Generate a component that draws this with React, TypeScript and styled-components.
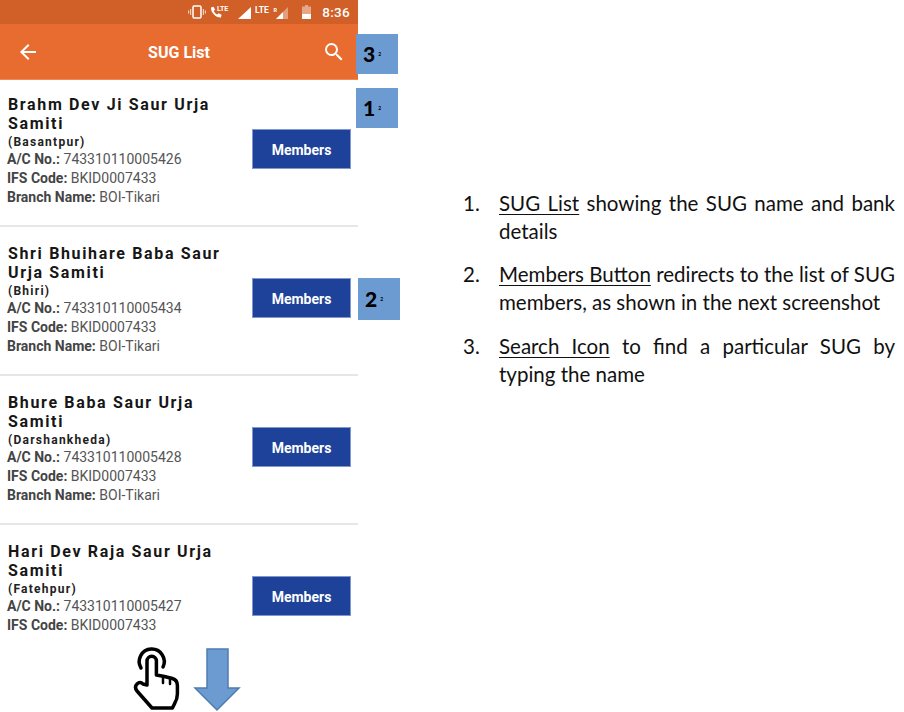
import React from "react";
import styled, { createGlobalStyle } from "styled-components";

const GlobalStyle = createGlobalStyle`
  html, body {
    margin: 0;
    background: #fff;
  }
`;

const Page = styled.div`
  position: relative;
  display: flex;
  width: 904px;
  height: 712px;
  overflow: hidden;
`;

const Phone = styled.div`
  width: 358px;
  flex-shrink: 0;
  font-family: Roboto, sans-serif;
`;

const StatusBar = styled.div`
  height: 24px;
  display: flex;
  align-items: center;
  justify-content: flex-end;
  padding-right: 8px;
  background: #d06027;
  color: #fff;
`;

const StatusIcon = styled.svg<{ $gap?: number }>`
  display: block;
  margin-right: ${p => p.$gap ?? 0}px;
`;

const Clock = styled.span`
  font-size: 13.5px;
  font-weight: 500;
  letter-spacing: 0.3px;
  margin-left: 11px;
`;

const Toolbar = styled.header`
  height: 56px;
  box-sizing: border-box;
  display: flex;
  align-items: center;
  padding: 1px 12px 0 16px;
  background: #e86c2f;
  border-bottom: 1px solid #f08a55;
  color: #fff;
`;

const ToolbarIcon = styled.svg`
  display: block;
  flex-shrink: 0;
  fill: currentColor;
`;

const ToolbarTitle = styled.h1`
  flex: 1;
  margin: 0 4px 0 0;
  text-align: center;
  font-size: 16px;
  font-weight: 700;
`;

const Item = styled.section`
  height: 149px;
  box-sizing: border-box;
  display: flex;
  align-items: flex-start;
  justify-content: space-between;
  padding: 17px 7px 0 7px;
  border-bottom: 2px solid #e6e6e6;

  &:first-of-type {
    height: 147px;
    padding-top: 15px;
  }

  &:last-of-type {
    border-bottom: none;
  }
`;

const Details = styled.div`
  width: 226px;
`;

const Title = styled.div`
  margin-left: 1px;
  font-size: 16px;
  font-weight: 700;
  line-height: 19px;
  letter-spacing: 1.65px;
  color: #161616;
`;

const Place = styled.div`
  margin: 0 0 -1px 1px;
  font-size: 12px;
  font-weight: 700;
  line-height: 18px;
  letter-spacing: 1.25px;
  color: #222;
`;

const Line = styled.div`
  font-size: 14px;
  line-height: 19px;
  color: #555;

  b {
    font-weight: 700;
    color: #444;
  }
`;

const MembersButton = styled.button`
  width: 99px;
  height: 40px;
  margin-top: 34px;
  padding: 1px 0 0;
  border: 1px solid #8098cc;
  background: #1e429a;
  color: #fff;
  font-family: Roboto, sans-serif;
  font-size: 14px;
  font-weight: 700;
`;

const Notes = styled.ol`
  list-style: none;
  margin: 0;
  padding: 189px 0 0 141px;
  width: 396px;
  font-family: Lato, sans-serif;
  font-size: 20.5px;
  line-height: 28px;
  color: #111;
`;

const Note = styled.li`
  position: relative;
  margin-bottom: 15px;
  text-align: justify;

  &:nth-child(2) {
    margin-bottom: 16px;
  }
`;

const NoteNumber = styled.span`
  position: absolute;
  left: -36px;
`;

const NoteLink = styled.span`
  text-decoration: underline;
  text-underline-offset: 3px;
  text-decoration-thickness: 1px;
`;

const Badge = styled.div<{ $x: number; $y: number; $h: number }>`
  position: absolute;
  left: ${p => p.$x}px;
  top: ${p => p.$y}px;
  width: 42px;
  height: ${p => p.$h}px;
  display: flex;
  align-items: center;
  padding: 0 0 1px 7px;
  box-sizing: border-box;
  background: #6c9bd2;
  color: #000;
  font-family: Lato, sans-serif;
  font-size: 21px;
  font-weight: 900;

  small {
    font-size: 5px;
    font-weight: 700;
    margin-left: 3px;
  }
`;

const Overlay = styled.svg<{ $x: number; $y: number }>`
  position: absolute;
  left: ${p => p.$x}px;
  top: ${p => p.$y}px;
`;

const items = [
  { name: "Brahm Dev Ji Saur Urja Samiti", place: "Basantpur", account: "743310110005426", branch: "BOI-Tikari" },
  { name: "Shri Bhuihare Baba Saur Urja Samiti", place: "Bhiri", account: "743310110005434", branch: "BOI-Tikari" },
  { name: "Bhure Baba Saur Urja Samiti", place: "Darshankheda", account: "743310110005428", branch: "BOI-Tikari" },
  // the branch line of this one is below the fold in the screenshot
  { name: "Hari Dev Raja Saur Urja Samiti", place: "Fatehpur", account: "743310110005427" }
];

const StatusIcons = () => (
  <>
    <StatusIcon width="18" height="14" viewBox="0 0 18 14" $gap={4}>
      <rect x="5" y="1" width="8" height="12" rx="1.2" fill="none" stroke="#fff" strokeWidth="1.5" />
      <path d="M2.6 4v6M0.6 5.5v3M15.4 4v6M17.4 5.5v3" stroke="#fff" strokeOpacity="0.7" strokeWidth="1.2" />
    </StatusIcon>
    <StatusIcon width="20" height="14" viewBox="0 0 20 14" $gap={8}>
      <path d="M1 2.5l2.5-.8 1.6 3-1.4 1.4c.7 1.6 1.9 2.8 3.5 3.5l1.4-1.4 3 1.6-.7 2.7C6 12.8.6 7.6 1 2.5z" fill="#fff" />
      <text x="7" y="6" fontFamily="Roboto, sans-serif" fontSize="7" fontWeight="700" fill="#fff">LTE</text>
    </StatusIcon>
    <StatusIcon width="13" height="13" viewBox="0 0 13 13" $gap={4}>
      <path d="M0 13L13 1v12z" fill="#fff" />
    </StatusIcon>
    <StatusIcon width="34" height="14" viewBox="0 0 34 14" $gap={13}>
      <text x="0" y="7.5" fontFamily="Roboto, sans-serif" fontSize="8.5" fontWeight="700" fill="#fff">LTE</text>
      <text x="18.5" y="6.5" fontFamily="Roboto, sans-serif" fontSize="5.5" fontWeight="700" fill="#fff">R</text>
      <path d="M21 14L33 2v12z" fill="#fff" fillOpacity="0.4" />
      <path d="M21 14l7-7v7z" fill="#fff" />
    </StatusIcon>
    <StatusIcon width="9" height="14" viewBox="0 0 9 14">
      <path d="M3 0h3v1.5h3V14H0V1.5h3z" fill="#fff" fillOpacity="0.45" />
      <path d="M0 9h9v5H0z" fill="#fff" />
    </StatusIcon>
  </>
);

const App = () => {
  return (
    <Page>
      <GlobalStyle />
      <Phone>
        <StatusBar>
          <StatusIcons />
          <Clock>8:36</Clock>
        </StatusBar>
        <Toolbar>
          <ToolbarIcon width="24" height="24" viewBox="0 0 24 24">
            <path d="M20 11H7.83l5.59-5.59L12 4l-8 8 8 8 1.41-1.41L7.83 13H20v-2z" />
          </ToolbarIcon>
          <ToolbarTitle>SUG List</ToolbarTitle>
          <ToolbarIcon width="24" height="24" viewBox="0 0 24 24">
            <path d="M15.5 14h-.79l-.28-.27A6.471 6.471 0 0 0 16 9.5 6.5 6.5 0 1 0 9.5 16c1.61 0 3.09-.59 4.23-1.57l.27.28v.79l5 4.99L20.49 19l-4.99-5zm-6 0C7.01 14 5 11.99 5 9.5S7.01 5 9.5 5 14 7.01 14 9.5 11.99 14 9.5 14z" />
          </ToolbarIcon>
        </Toolbar>
        {items.map(item => (
          <Item key={item.account}>
            <Details>
              <Title>{item.name}</Title>
              <Place>({item.place})</Place>
              <Line>
                <b>A/C No.:</b> {item.account}
              </Line>
              <Line>
                <b>IFS Code:</b> BKID0007433
              </Line>
              {item.branch && (
                <Line>
                  <b>Branch Name:</b> {item.branch}
                </Line>
              )}
            </Details>
            <MembersButton>Members</MembersButton>
          </Item>
        ))}
      </Phone>

      <Notes>
        <Note>
          <NoteNumber>1.</NoteNumber>
          <NoteLink>SUG List</NoteLink> showing the SUG name and bank details
        </Note>
        <Note>
          <NoteNumber>2.</NoteNumber>
          <NoteLink>Members Button</NoteLink> redirects to the list of SUG members, as shown in the next screenshot
        </Note>
        <Note>
          <NoteNumber>3.</NoteNumber>
          <NoteLink>Search Icon</NoteLink> to find a particular SUG by typing the name
        </Note>
      </Notes>

      <Badge $x={356} $y={34} $h={40}>3<small>2</small></Badge>
      <Badge $x={356} $y={88} $h={40}>1<small>2</small></Badge>
      <Badge $x={358} $y={278} $h={42}>2<small>2</small></Badge>

      <Overlay $x={132} $y={644} width="50" height="68" viewBox="0 0 50 68">
        <path d="M9 24A12.5 12.5 0 1 1 31 23" fill="none" stroke="#000" strokeWidth="3.5" strokeLinecap="round" />
        <path
          d="M15 41V17a4.7 4.7 0 0 1 9.4 0V31l8 1.5 8 2q5 1.5 5 7V50q0 5-3 10l-2 4H20L5 47q-3-4 0-7 3-3 6 0z"
          fill="#fff"
          stroke="#000"
          strokeWidth="3.5"
          strokeLinejoin="round"
        />
        <path d="M31 33v6M38 35v5" fill="none" stroke="#000" strokeWidth="2.5" strokeLinecap="round" />
      </Overlay>
      <Overlay $x={192} $y={646} width="50" height="66" viewBox="0 0 50 66">
        <path d="M15 3h21v39h11L25 64 3 42h12z" fill="#6c9bd2" stroke="#4f7cb0" strokeWidth="1.5" />
      </Overlay>
    </Page>
  );
};

export default App;
